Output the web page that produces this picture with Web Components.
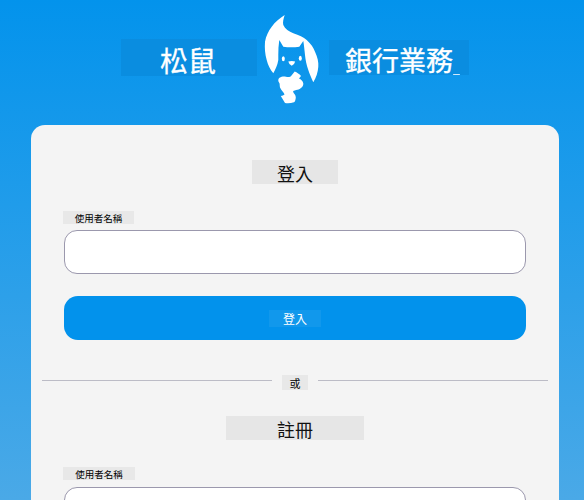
<!DOCTYPE html>
<html lang="zh-Hant">
<head>
<meta charset="utf-8">
<title>松鼠銀行業務</title>
<style>
  html, body { margin: 0; height: 100%; overflow: hidden; }
  body {
    background: linear-gradient(180deg, #0393ec 0%, #4aa9e7 100%);
    font-family: "Noto Sans CJK TC", "Noto Sans", sans-serif;
  }
</style>
</head>
<body>
<bank-page>
  <bank-header slot="header"></bank-header>
  <auth-card>
    <mask-text size="18" w="86" h="24">登入</mask-text>
    <form-field label="使用者名稱" w="71" gap="6"></form-field>
    <primary-button>登入</primary-button>
    <or-divider></or-divider>
    <mask-text size="18" w="138" h="24">註冊</mask-text>
    <form-field label="使用者名稱" w="72" gap="7"></form-field>
  </auth-card>
</bank-page>

<script>
class BankPage extends HTMLElement {
  constructor() {
    super();
    this.attachShadow({ mode: "open" }).innerHTML = `
      <style>
        :host { display: block; padding: 0 25px 0 31px; width: 528px; }
      </style>
      <slot name="header"></slot>
      <slot></slot>`;
  }
}

class BankHeader extends HTMLElement {
  constructor() {
    super();
    this.attachShadow({ mode: "open" }).innerHTML = `
      <style>
        :host { display: flex; justify-content: center; align-items: flex-start; height: 125px; color: #fff; -webkit-text-stroke: 0.35px #fff; }
        .word { display: flex; align-items: center; justify-content: center; background: #0a8de0; margin-top: 39px; box-sizing: border-box; line-height: 1; }
        .left { width: 136px; height: 37px; font-size: 28px; padding: 5px 2px 0 0; }
        .right { width: 140px; height: 35px; margin-top: 40px; font-size: 27px; padding-top: 3px; position: relative; }
        .right::after { content: ""; position: absolute; left: 124px; bottom: 0; width: 7px; height: 1px; border-radius: 1px; background: #cfe9fb; }
        svg { width: 72px; height: 105px; margin-top: 5px; display: block; }
      </style>
      <div class="word left">松鼠</div>
      <svg viewBox="257 5 72 105" fill="#fff">
        <path fill-rule="evenodd" d="M284.7 15 C283.400 19 282.600 22 283.300 25 C285 29 289 31.500 293.300 33.300 C299 35.500 303.500 37 306.700 40 C311 44 313.500 47.500 315 51.700 C317.500 57 318.700 62 318.300 66.700 C318 72 316 78 313.300 82.300 C311.500 78 309.500 74 308.300 70 C306.500 65 305.500 60 305 55 C304.500 50 304 45 303.300 41 L299.300 46.700 C294 47.500 288.500 47.500 283.300 46.700 L279.300 40 C278.500 45 278.300 50 278.300 55 L278.300 60 C277.500 65 275.500 69.500 273.300 73.300 C270 69.500 268 65 266.700 60 C265 54 264.500 48 265 41.700 C266 36 268.500 31 271.700 26.700 C275 22 280 18 284.700 15Z"/>
        <ellipse cx="283.300" cy="58.800" rx="1.500" ry="2.500"/>
        <ellipse cx="300.300" cy="58.300" rx="1.500" ry="2.500"/>
        <path d="M288.300 61.500 Q291.700 60.600 295.200 61.500 Q294.500 64.500 291.700 65.800 Q289 64.500 288.300 61.500Z"/>
        <path d="M294.700 71.500 C297 72.500 299.500 74 301 76 L299 78.500 C301 79.500 303 81 303.300 83.500 C303.500 86.800 300.500 89 297.500 89.800 C295.500 90.300 293.800 90.500 293 91.500 C293.500 93.500 296 95 295.800 97.700 C295.500 100 295 101.700 294 102.300 C291 103.200 288 103.500 285 103 L280.800 96 C282.500 95.500 283.500 95.500 284.500 94.500 C284 92.500 281.500 91 280 87.500 C279.500 85.500 280 84 279.300 83 C277.800 81 278 78.800 279.500 77.800 C281.500 76.500 284 76.300 286 76.800 C288.500 77.500 290.500 77 291.500 75.500 Z"/>
      </svg>
      <div class="word right">銀行業務</div>`;
  }
}

class AuthCard extends HTMLElement {
  constructor() {
    super();
    this.attachShadow({ mode: "open" }).innerHTML = `
      <style>
        :host { display: block; background: #f4f4f4; border-radius: 14px 14px 0 0; height: 500px; padding: 35px 11px 0; box-sizing: border-box; }
        .col { display: flex; flex-direction: column; align-items: center; }
      </style>
      <div class="col"><slot></slot></div>`;
  }
}

class MaskText extends HTMLElement {
  constructor() {
    super();
    const w = this.getAttribute("w"), h = this.getAttribute("h"), size = this.getAttribute("size");
    this.attachShadow({ mode: "open" }).innerHTML = `
      <style>
        :host { display: flex; align-items: center; justify-content: center; flex: none; box-sizing: border-box; padding-top: 2px;
          width: ${w}px; height: ${h}px; font-size: ${size}px; background: #e6e6e6; color: #111; line-height: 1; }
      </style>
      <slot></slot>`;
  }
}

class FormField extends HTMLElement {
  constructor() {
    super();
    const label = this.getAttribute("label"), w = this.getAttribute("w"), gap = this.getAttribute("gap");
    this.attachShadow({ mode: "open" }).innerHTML = `
      <style>
        :host { display: flex; flex-direction: column; align-items: flex-start; width: 462px; margin-top: 27px; }
        .label { width: ${w}px; height: 13px; margin-left: -1px; background: #e8e8e8; color: #000; font-size: 9.5px; line-height: 14px; text-align: center; }
        input { box-sizing: border-box; display: block; width: 462px; height: 44px; margin: ${gap}px 0 0; padding: 0 12px; background: #fff; border: 1px solid #9b98ad; border-radius: 13px; outline: none; }
      </style>
      <div class="label">${label}</div>
      <input type="text" aria-label="${label}">`;
  }
}

class PrimaryButton extends HTMLElement {
  constructor() {
    super();
    this.attachShadow({ mode: "open" }).innerHTML = `
      <style>
        :host { display: flex; align-items: center; justify-content: center; width: 462px; height: 44px; margin-top: 22px; background: #0292ec; border-radius: 14px; color: #fff; }
        span { display: block; width: 52px; height: 17px; line-height: 18px; font-size: 12px; text-align: center; background: #1198ec; }
      </style>
      <span><slot></slot></span>`;
  }
}

class OrDivider extends HTMLElement {
  constructor() {
    super();
    this.attachShadow({ mode: "open" }).innerHTML = `
      <style>
        :host { display: flex; align-items: center; gap: 10px; width: 506px; margin-top: 35px; height: 15px; margin-bottom: 26px; }
        i { flex: 1; height: 1px; background: #bcbcc6; position: relative; top: -2px; }
        span { width: 26px; height: 15px; line-height: 17px; text-align: center; font-size: 11px; background: #e8e8e8; color: #000; }
      </style>
      <i></i><span>或</span><i></i>`;
  }
}

customElements.define("bank-page", BankPage);
customElements.define("bank-header", BankHeader);
customElements.define("auth-card", AuthCard);
customElements.define("mask-text", MaskText);
customElements.define("form-field", FormField);
customElements.define("primary-button", PrimaryButton);
customElements.define("or-divider", OrDivider);
</script>
</body>
</html>
